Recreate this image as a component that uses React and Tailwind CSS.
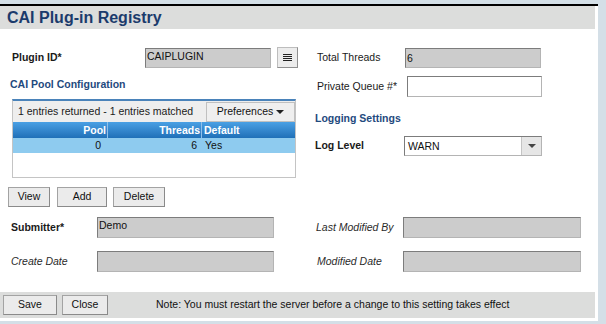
const inputGray =
  "bg-[#cccccc] border border-t-[#7c7c7c] border-l-[#7c7c7c] border-r-[#b4b4b4] border-b-[#b4b4b4]";
const inputWhite =
  "bg-white border border-t-[#7c7c7c] border-l-[#7c7c7c] border-r-[#b4b4b4] border-b-[#b4b4b4]";
const btn =
  "h-[20px] bg-[#ebebeb] border border-[#a3a3a3] border-b-[#8a8a8a] border-r-[#8a8a8a] text-[10.5px] text-[#111] flex items-center justify-center";

const Label = ({ children, className = "" }) => (
  <span className={`text-[10.5px] font-bold text-[#1a1a1a] ${className}`}>{children}</span>
);

const ItalicLabel = ({ children, className = "" }) => (
  <span className={`text-[10.5px] italic text-[#2a2a2a] ${className}`}>{children}</span>
);

const PoolTable = () => (
  <div className="ml-[12px] w-[284px] h-[79px] border border-[#c4c4c4] border-t-2 border-t-[#4a83ba] flex flex-col">
    {/* toolbar */}
    <div className="h-[21px] bg-[#eeeeee] flex items-center justify-between">
      <span className="pl-[5px] text-[10.5px] text-[#1a1a1a]">1 entries returned - 1 entries matched</span>
      <div className="h-[20px] w-[89px] bg-[#efefef] border border-[#c0c0c0] flex items-center justify-center gap-[3px] text-[10.5px] text-[#111]">
        Preferences
        <span className="w-0 h-0 border-l-[4px] border-r-[4px] border-t-[4px] border-l-transparent border-r-transparent border-t-[#222] mt-[1px]" />
      </div>
    </div>
    {/* header */}
    <div className="h-[16px] flex bg-gradient-to-b from-[#4aa0e4] to-[#1f70b8] text-white text-[10.5px] font-bold">
      <div className="w-[95px] text-right pr-[1px] border-r border-[#8fc0ea] leading-[16px]">Pool</div>
      <div className="w-[94px] text-right pr-[1px] border-r border-[#8fc0ea] leading-[16px]">Threads</div>
      <div className="flex-1 pl-[2px] leading-[16px]">Default</div>
    </div>
    {/* row */}
    <div className="h-[15px] flex bg-[#8ecbef] text-[10.5px] text-[#111]">
      <div className="w-[95px] text-right pr-[7px] leading-[15px]">0</div>
      <div className="w-[94px] text-right pr-[5px] leading-[15px]">6</div>
      <div className="flex-1 pl-[3px] leading-[15px]">Yes</div>
    </div>
    <div className="flex-1 bg-white" />
  </div>
);

export default function App() {
  return (
    <div className="w-[606px] h-[324px] bg-[#d4dfe7] overflow-hidden" style={{ fontFamily: '"Liberation Sans", Arial, sans-serif' }}>
      <div className="mt-[4px] w-[598px] h-[317px] bg-white border-t-2 border-black flex flex-col pr-[3px]">
        {/* title */}
        <div className="h-[23px] bg-[#dcdddc] flex items-center pl-[7px]">
          <h1 className="text-[16px] font-bold text-[#1b3b6c] leading-none">CAI Plug-in Registry</h1>
        </div>

        {/* two columns */}
        <div className="flex">
          <div className="w-[300px] flex flex-col pt-[18px]">
            <div className="flex items-center h-[21px]">
              <Label className="pl-[12px] w-[145px]">Plugin ID*</Label>
              <div className={`w-[126px] h-[20px] ${inputGray} text-[10.5px] text-[#111] pl-[1px] leading-[14px]`}>CAIPLUGIN</div>
              <div className="ml-[6px] w-[21px] h-[21px] bg-[#ececec] border border-[#bdbdbd] border-b-[#8f8f8f] border-r-[#8f8f8f] flex flex-col items-center justify-center gap-[1px]">
                <span className="w-[9px] h-[1px] bg-[#222]" />
                <span className="w-[9px] h-[1px] bg-[#222]" />
                <span className="w-[9px] h-[1px] bg-[#222]" />
                <span className="w-[9px] h-[1px] bg-[#222]" />
              </div>
            </div>
            <div className="mt-[9px] pl-[10px] text-[10.5px] font-bold text-[#1f4a7e] leading-[14px]">CAI Pool Configuration</div>
            <div className="mt-[8px]">
              <PoolTable />
            </div>
            <div className="mt-[9px] flex">
              <div className={`ml-[8px] w-[42px] ${btn}`}>View</div>
              <div className={`ml-[7px] w-[50px] ${btn}`}>Add</div>
              <div className={`ml-[6px] w-[52px] ${btn}`}>Delete</div>
            </div>
          </div>

          <div className="flex-1 flex flex-col pt-[18px]">
            <div className="flex items-center h-[21px]">
              <span className="pl-[17px] w-[105px] text-[10.5px] text-[#1a1a1a]">Total Threads</span>
              <div className={`w-[136px] h-[20px] ${inputGray} text-[10.5px] text-[#111] pl-[1px] leading-[18px]`}>6</div>
            </div>
            <div className="mt-[8px] flex items-center h-[21px]">
              <span className="pl-[17px] w-[107px] text-[10.5px] text-[#1a1a1a]">Private Queue #*</span>
              <div className={`w-[135px] h-[21px] ${inputWhite}`} />
            </div>
            <div className="mt-[14px] pl-[15px] text-[10.5px] font-bold text-[#1f4a7e] leading-[14px]">Logging Settings</div>
            <div className="mt-[11px] flex items-center h-[20px]">
              <Label className="pl-[15px] w-[104px]">Log Level</Label>
              <div className={`w-[138px] h-[20px] ${inputWhite} flex`}>
                <span className="flex-1 pl-[3px] text-[10.5px] text-[#111] leading-[18px]">WARN</span>
                <span className="w-[20px] bg-[#e6e6e6] border-l border-[#c4c4c4] flex items-center justify-center">
                  <span className="w-0 h-0 border-l-[4px] border-r-[4px] border-t-[4px] border-l-transparent border-r-transparent border-t-[#444]" />
                </span>
              </div>
            </div>
          </div>
        </div>

        {/* audit rows */}
        <div className="mt-[10px] flex items-center h-[21px]">
          <Label className="pl-[11px] w-[97px]">Submitter*</Label>
          <div className={`w-[177px] h-[21px] ${inputGray} text-[10.5px] text-[#111] pl-[1px] leading-[14px]`}>Demo</div>
          <ItalicLabel className="ml-[42px] w-[87px]">Last Modified By</ItalicLabel>
          <div className={`w-[178px] h-[21px] ${inputGray}`} />
        </div>
        <div className="mt-[13px] flex items-center h-[21px]">
          <ItalicLabel className="pl-[11px] w-[97px]">Create Date</ItalicLabel>
          <div className={`w-[177px] h-[21px] ${inputGray}`} />
          <ItalicLabel className="ml-[43px] w-[86px]">Modified Date</ItalicLabel>
          <div className={`w-[178px] h-[21px] ${inputGray}`} />
        </div>

        {/* footer */}
        <div className="mt-[20px] h-[26px] bg-[#dcdddc] flex items-center">
          <div className={`ml-[3px] w-[54px] ${btn}`}>Save</div>
          <div className={`ml-[5px] w-[46px] ${btn}`}>Close</div>
          <span className="ml-[48px] text-[10.5px] text-[#111]">Note: You must restart the server before a change to this setting takes effect</span>
        </div>
      </div>
    </div>
  );
}
